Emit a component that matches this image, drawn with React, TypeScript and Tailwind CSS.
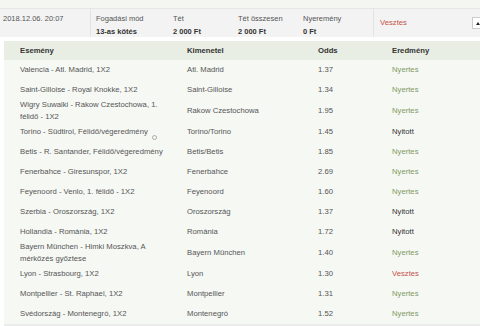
import React from "react";

type Row = { e: string; k: string; o: string; r: "Nyertes" | "Vesztes" | "Nyitott"; two?: boolean };

const rows: Row[] = [
  { e: "Valencia - Atl. Madrid, 1X2", k: "Atl. Madrid", o: "1.37", r: "Nyertes" },
  { e: "Saint-Gilloise - Royal Knokke, 1X2", k: "Saint-Gilloise", o: "1.34", r: "Nyertes" },
  { e: "Wigry Suwalki - Rakow Czestochowa, 1. félidő - 1X2", k: "Rakow Czestochowa", o: "1.95", r: "Nyertes", two: true },
  { e: "Torino - Südtirol, Félidő/végeredmény", k: "Torino/Torino", o: "1.45", r: "Nyitott" },
  { e: "Betis - R. Santander, Félidő/végeredmény", k: "Betis/Betis", o: "1.85", r: "Nyertes" },
  { e: "Fenerbahce - Giresunspor, 1X2", k: "Fenerbahce", o: "2.69", r: "Nyertes" },
  { e: "Feyenoord - Venlo, 1. félidő - 1X2", k: "Feyenoord", o: "1.60", r: "Nyertes" },
  { e: "Szerbia - Oroszország, 1X2", k: "Oroszország", o: "1.37", r: "Nyitott" },
  { e: "Hollandia - Románia, 1X2", k: "Románia", o: "1.72", r: "Nyitott" },
  { e: "Bayern München - Himki Moszkva, A mérkőzés győztese", k: "Bayern München", o: "1.40", r: "Nyertes", two: true },
  { e: "Lyon - Strasbourg, 1X2", k: "Lyon", o: "1.30", r: "Vesztes" },
  { e: "Montpellier - St. Raphael, 1X2", k: "Montpellier", o: "1.31", r: "Nyertes" },
  { e: "Svédország - Montenegró, 1X2", k: "Montenegró", o: "1.52", r: "Nyertes" },
];

const resColor = (r: Row["r"]) =>
  r === "Nyertes" ? "text-[#7e9a63]" : r === "Vesztes" ? "text-[#c4514a]" : "text-[#333]";

export default function App() {
  return (
    <div
      className="w-[480px] h-[326px] overflow-hidden bg-white text-[7.7px] text-[#555]"
      style={{ fontFamily: '"Liberation Sans", Arial, sans-serif' }}
    >
      <div className="h-[8px] bg-[#f4f7f1]" />
      <div className="h-[1px] bg-[#e6e6e6]" />
      <div className="flex h-[28px] bg-[#f3f3f3] text-[7.5px]">
        <div className="w-[91px] shrink-0 pl-[3px] pt-[3px] leading-[13px] border-r border-[#e2e2e2] whitespace-nowrap">2018.12.06. 20:07</div>
        <div className="w-[76px] shrink-0 pl-[5px] pt-[3px] leading-[13px] whitespace-nowrap">
          <div>Fogadási mód</div>
          <div className="font-bold text-[#333]">13-as kötés</div>
        </div>
        <div className="w-[65px] shrink-0 pl-[6px] pt-[3px] leading-[13px] whitespace-nowrap">
          <div>Tét</div>
          <div className="font-bold text-[#333]">2 000 Ft</div>
        </div>
        <div className="w-[65px] shrink-0 pl-[6px] pt-[3px] leading-[13px] whitespace-nowrap">
          <div>Tét összesen</div>
          <div className="font-bold text-[#333]">2 000 Ft</div>
        </div>
        <div className="w-[77px] shrink-0 pl-[6px] pt-[3px] leading-[13px] border-r border-[#e2e2e2] whitespace-nowrap">
          <div>Nyeremény</div>
          <div className="font-bold text-[#333]">0 Ft</div>
        </div>
        <div className="flex-1 flex items-center pl-[6px] text-[7.7px] text-[#c4514a]">Vesztes</div>
        <div className="flex items-center mr-[-3px]">
          <div className="w-[11px] h-[12px] bg-white border border-[#ccc] flex items-center justify-center">
            <div className="w-0 h-0 border-l-[2.5px] border-r-[2.5px] border-b-[3px] border-l-transparent border-r-transparent border-b-[#222]" />
          </div>
        </div>
      </div>
      <div className="h-[4px]" />
      <div className="ml-[4px] bg-[#f6f8f4] border-b-[3px] border-[#ececec]">
        <div className="flex h-[19px] items-center bg-[#e8eee4] font-bold text-[#333]">
          <div className="w-[183px] shrink-0 pl-[16px]">Esemény</div>
          <div className="w-[131px] shrink-0">Kimenetel</div>
          <div className="w-[74px] shrink-0">Odds</div>
          <div className="flex-1">Eredmény</div>
        </div>
        {rows.map((r, i) => (
          <div key={i} className={`flex items-center ${r.two ? "h-[22px]" : "h-[20px]"}`}>
            <div className="w-[183px] shrink-0 pl-[16px] pr-[17px] leading-[12px] relative">
              {r.e}
              {i === 3 && (
                <span className="absolute left-[148px] top-[9px] w-[5px] h-[5px] rounded-full border border-[#aaa]" />
              )}
            </div>
            <div className="w-[131px] shrink-0 whitespace-nowrap">{r.k}</div>
            <div className="w-[74px] shrink-0">{r.o}</div>
            <div className={`flex-1 ${resColor(r.r)}`}>{r.r}</div>
          </div>
        ))}
      </div>
    </div>
  );
}
